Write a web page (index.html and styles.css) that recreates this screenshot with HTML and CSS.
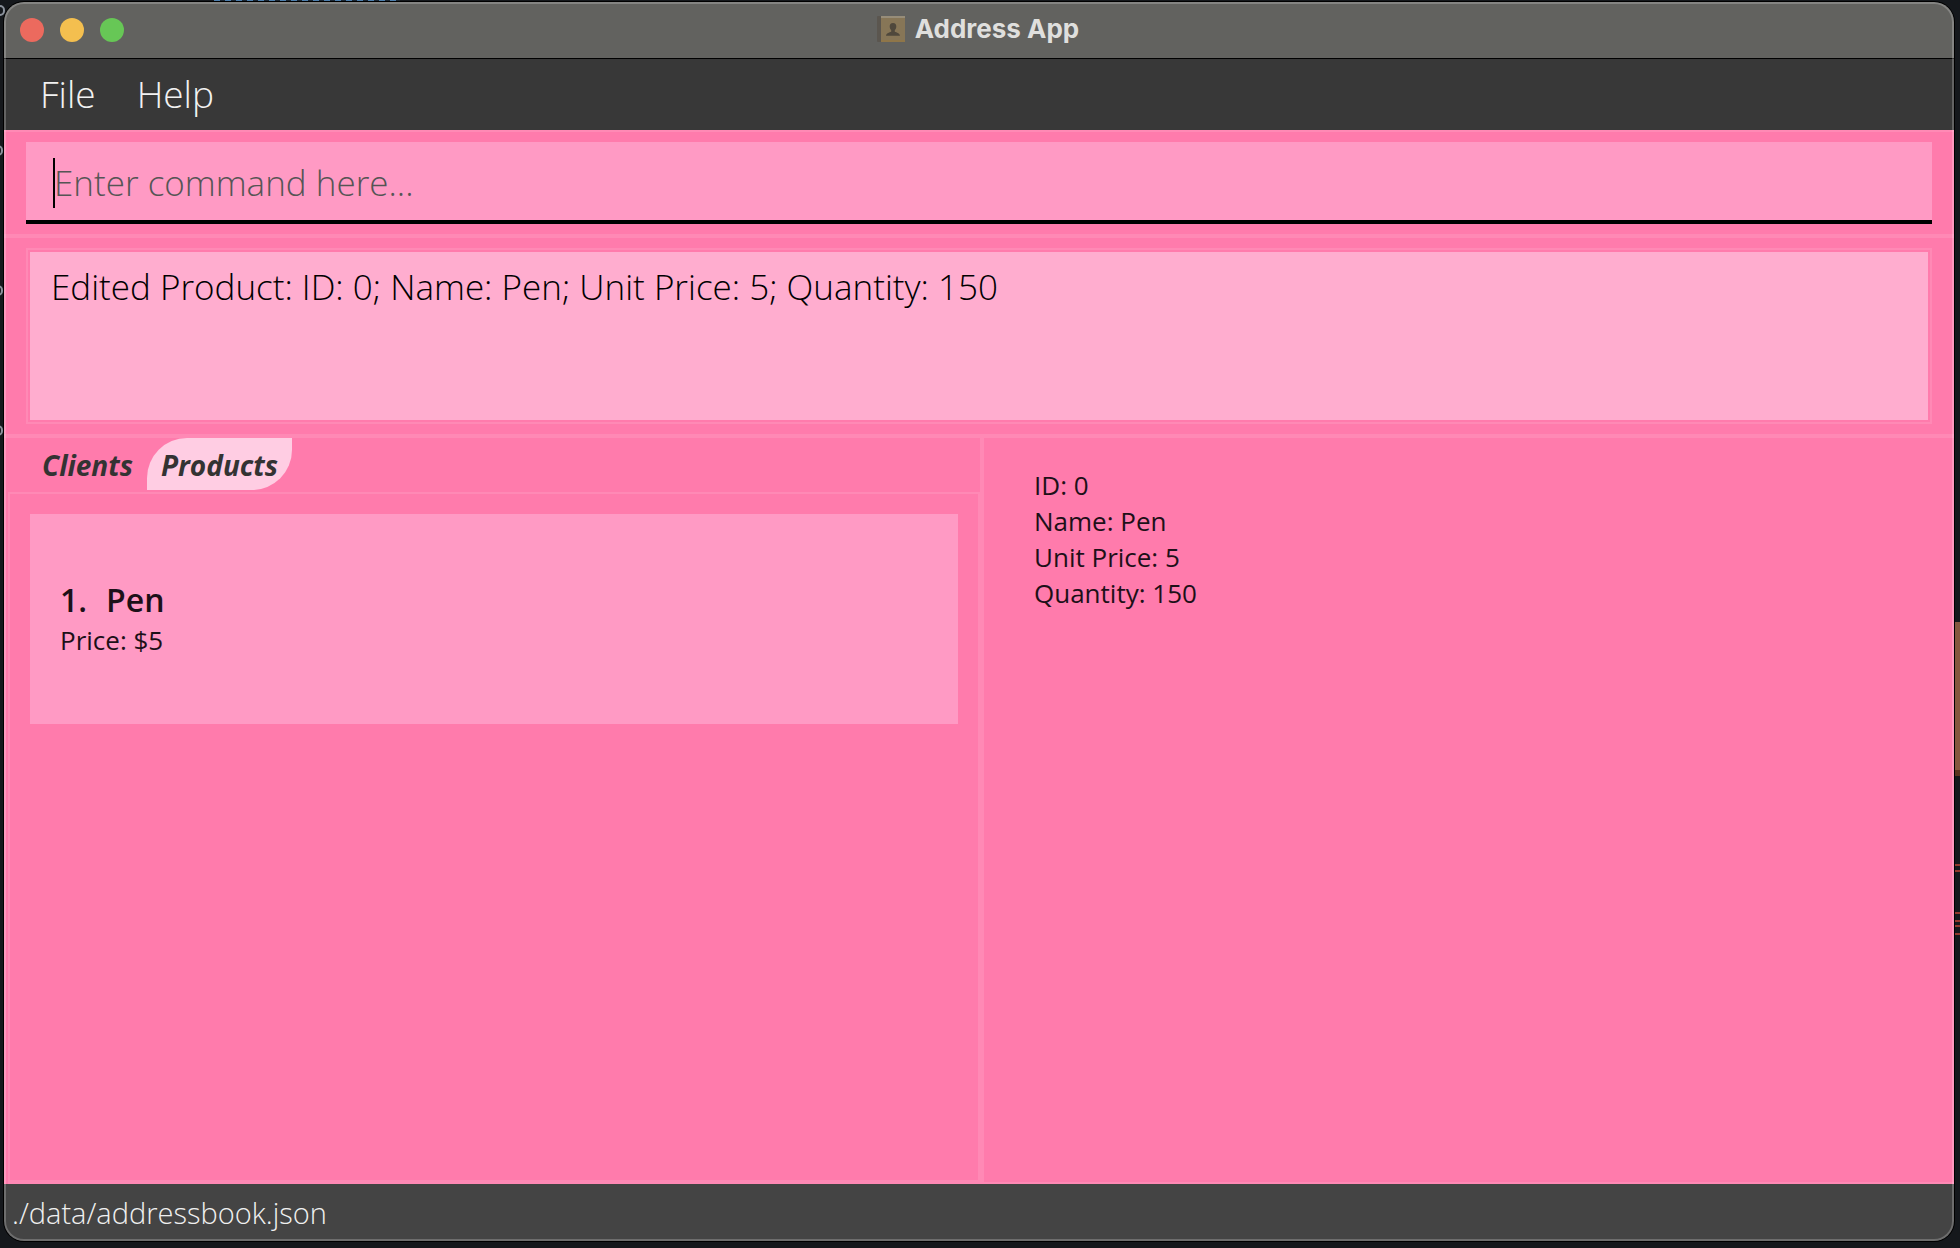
FILE: index.html
```html
<!DOCTYPE html>
<html lang="en">
<head>
<meta charset="utf-8">
<title>Address App</title>
<link rel="stylesheet" href="styles.css">
</head>
<body>
<div class="desktop" aria-hidden="true">
  <div class="desktop-link"></div>
  <div class="desktop-note"></div>
  <div class="mark mark-a"></div>
  <div class="mark mark-b"></div>
  <div class="mark mark-c"></div>
  <div class="mark mark-d"></div>
  <div class="tick tick-a"></div>
  <div class="tick tick-b"></div>
  <div class="tick tick-c"></div>
</div>
<div class="window">
  <header class="titlebar">
    <div class="lights">
      <button class="light light-close" aria-label="Close"></button>
      <button class="light light-minimize" aria-label="Minimize"></button>
      <button class="light light-zoom" aria-label="Zoom"></button>
    </div>
    <h1 class="title">
      <svg class="title-icon" width="28" height="26" viewBox="0 0 28 26" aria-hidden="true">
        <rect x="0" y="0" width="6" height="26" rx="1" fill="#5b564f"/>
        <rect x="4" y="0" width="24" height="26" rx="1" fill="#877657"/>
        <rect x="4" y="0" width="24" height="2" fill="#978d79"/>
        <rect x="4" y="24" width="24" height="2" fill="#8f7649"/>
        <path d="M16 7c-2.300 0-3.500 1.600-3.300 3.800.100 1.600.700 2.700 1.500 3.300v1.600c-2 .800-4.700 1.200-5.200 4h14c-.500-2.800-3.200-3.200-5.200-4v-1.600c.800-.600 1.400-1.700 1.500-3.300C19.500 8.600 18.300 7 16 7z" fill="#4f483c"/>
      </svg>
      <span>Address App</span>
    </h1>
  </header>
  <nav class="menubar">
    <button class="menu">File</button>
    <button class="menu">Help</button>
  </nav>
  <main class="content">
    <div class="command">
      <input class="command-input" type="text" placeholder="Enter command here..." aria-label="Command">
      <span class="caret"></span>
    </div>
    <div class="result">
      <output class="result-text">Edited Product: ID: 0; Name: Pen; Unit Price: 5; Quantity: 150</output>
    </div>
    <div class="split">
      <section class="list-pane">
        <div class="tabs" role="tablist">
          <button class="tab" role="tab" aria-selected="false">Clients</button>
          <button class="tab tab-selected" role="tab" aria-selected="true">Products</button>
        </div>
        <div class="list">
          <article class="card">
            <h2 class="card-title"><span>1.</span><span>Pen</span></h2>
            <p class="card-line">Price: $5</p>
          </article>
        </div>
      </section>
      <section class="detail-pane">
        <p>ID: 0</p>
        <p>Name: Pen</p>
        <p>Unit Price: 5</p>
        <p>Quantity: 150</p>
      </section>
    </div>
  </main>
  <footer class="statusbar">./data/addressbook.json</footer>
</div>
</body>
</html>
```
FILE: styles.css
```css
* {
  box-sizing: border-box;
}

body {
  margin: 0;
  min-height: 100vh;
  padding: 2px 6px 7px 4px;
  display: flex;
  background: #15181c;
  font-family: "Open Sans", "Noto Sans", sans-serif;
  color: #1d1018;
}

h1, h2, p {
  margin: 0;
}

button {
  border: 0;
  padding: 0;
  background: none;
  color: inherit;
  font: inherit;
}

/* Desktop showing around the window */
.desktop {
  position: absolute;
  inset: 0;
  overflow: hidden;
}

.desktop-link {
  position: absolute;
  top: 0;
  left: 214px;
  width: 186px;
  height: 1px;
  background: repeating-linear-gradient(90deg, #4d7fae 0 6px, #1b2733 6px 11px);
}

.desktop-note {
  position: absolute;
  top: 622px;
  right: 0;
  width: 5px;
  height: 154px;
  background: #85573f;
  border-bottom: 6px solid #5b341f;
}

.mark {
  position: absolute;
  left: -7px;
  width: 10px;
  height: 11px;
  border: 2px solid #8b929c;
  border-radius: 5px;
}

.mark-a { top: 5px; left: -5px; }
.mark-b { top: 145px; }
.mark-c { top: 285px; }
.mark-d { top: 425px; }

.tick {
  position: absolute;
  right: 0;
  width: 5px;
  height: 8px;
  border: 2px solid #92382c;
  border-width: 2px 0;
}

.tick-a { top: 864px; }
.tick-b { top: 912px; height: 10px; }
.tick-c { top: 925px; height: 10px; }

/* Window frame */
.window {
  position: relative;
  flex: 1;
  display: flex;
  flex-direction: column;
  border-radius: 20px;
  overflow: hidden;
  box-shadow: 0 0 0 1px #000;
}

.window::after {
  content: "";
  position: absolute;
  inset: 0;
  border: 2px solid rgba(255, 255, 255, 0.22);
  border-radius: 20px;
  pointer-events: none;
}

.titlebar {
  display: grid;
  grid-template-columns: 1fr auto 1fr;
  align-items: center;
  height: 57px;
  padding: 0 18px 0 16px;
  background: #62625f;
  border-bottom: 1px solid #000;
}

.lights {
  display: flex;
  gap: 16px;
}

.light {
  width: 24px;
  height: 24px;
  border-radius: 50%;
}

.light-close { background: #ec6a5e; }
.light-minimize { background: #f4bf4f; }
.light-zoom { background: #67c756; }

.title {
  display: flex;
  align-items: center;
  gap: 10px;
  padding-bottom: 2px;
  font: 700 26px/32px Inter, sans-serif;
  color: #dfdfdd;
}

.menubar {
  display: flex;
  gap: 41px;
  height: 71px;
  padding: 0 36px;
  background: #383838;
  color: #f2f2f2;
  font-size: 37px;
  font-weight: 300;
  line-height: 68px;
}

.menu {
  height: 69px;
}

.content {
  flex: 1;
  display: flex;
  flex-direction: column;
  background: #ff7bac;
  border-top: 2px solid #ff8ab5;
}

.command {
  position: relative;
  padding: 10px 22px;
  border-bottom: 4px solid #ff89b5;
}

.command-input {
  display: block;
  width: 100%;
  height: 82px;
  padding: 2px 28px 0;
  border: 0;
  border-bottom: 4px solid #000;
  border-radius: 0;
  outline: 0;
  background: #ff9ac4;
  color: #000;
  font: 300 35px/48px "Open Sans", sans-serif;
}

.command-input::placeholder {
  color: #555;
  opacity: 1;
}

.caret {
  position: absolute;
  left: 49px;
  top: 26px;
  width: 2px;
  height: 50px;
  background: #000;
}

.result {
  padding: 10px 22px;
  border-bottom: 4px solid #ff89b5;
}

.result-text {
  display: block;
  height: 176px;
  padding: 13px 23px;
  border: 2px solid #ff89b5;
  box-shadow: inset 0 0 0 2px #ff7bac;
  background: #ffadcf;
  color: #000;
  font-size: 35px;
  font-weight: 300;
  line-height: 48px;
}

.split {
  flex: 1;
  display: grid;
  grid-template-columns: 1fr 1fr;
}

.list-pane {
  display: flex;
  flex-direction: column;
  border-right: 4px solid #ff89b5;
  margin-right: -5px;
  padding-left: 4px;
}

.tabs {
  display: flex;
  height: 54px;
  padding-left: 20px;
}

.tab {
  height: 52px;
  padding: 2px 14px 0;
  color: #333;
  font-size: 28px;
  font-style: italic;
  font-weight: 700;
  line-height: 50px;
}

.tab-selected {
  background: #ffcde3;
  border-radius: 40px 0;
}

.list {
  flex: 1;
  padding: 20px;
  border: 2px solid #ff89b5;
  border-bottom-width: 4px;
}

.card {
  height: 210px;
  padding: 64px 30px;
  background: #ff9ac4;
}

.card-title {
  display: flex;
  gap: 19px;
  font-size: 32px;
  font-weight: 600;
  line-height: 44px;
}

.card-line {
  font-size: 26px;
  line-height: 36px;
}

.detail-pane {
  margin-left: 5px;
  padding: 29px 50px;
  border-bottom: 2px solid #ff89b5;
  font-size: 26px;
  line-height: 36px;
}

.statusbar {
  height: 57px;
  padding: 0 8px;
  background: #444;
  color: #f0f0f0;
  font-size: 29px;
  font-weight: 300;
  line-height: 57px;
}
```
